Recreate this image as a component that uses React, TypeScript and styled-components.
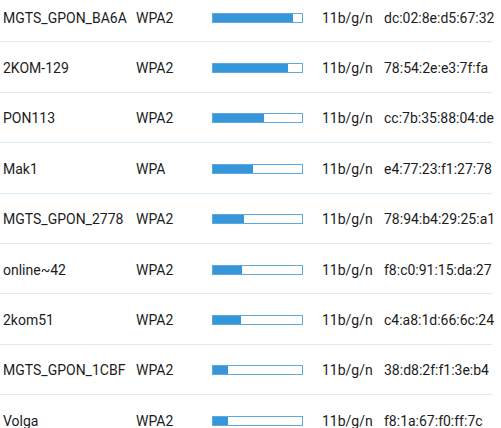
import React from "react";
import styled, { createGlobalStyle } from "styled-components";

const Global = createGlobalStyle`
  html, body { margin: 0; padding: 0; background: #fff; overflow: hidden; }
  body { font-family: Roboto, "Liberation Sans", Arial, sans-serif; }
`;

const Table = styled.div`
  width: 492px;
  margin-top: -8px;
  display: flex;
  flex-direction: column;
`;

const Row = styled.div`
  box-sizing: border-box;
  height: 50.4px;
  padding: 2px 0 0 3px;
  border-bottom: 1px solid #dcebf8;
  display: grid;
  grid-template-columns: 133px 76px 110px 62px 1fr;
  align-items: center;
  font-size: 14px;
  color: #1c1c1c;
  white-space: nowrap;
`;

const Cell = styled.div`
  overflow: visible;
`;

const Bar = styled.div`
  box-sizing: border-box;
  width: 91px;
  height: 10px;
  border: 1px solid #5fa9df;
  background: #fff;
  display: flex;
`;

const Fill = styled.div`
  height: 100%;
  background: #3597d9;
`;

const rows = [
  { ssid: "MGTS_GPON_BA6A", sec: "WPA2", sig: 80, mode: "11b/g/n", mac: "dc:02:8e:d5:67:32" },
  { ssid: "2KOM-129", sec: "WPA2", sig: 75, mode: "11b/g/n", mac: "78:54:2e:e3:7f:fa" },
  { ssid: "PON113", sec: "WPA2", sig: 51, mode: "11b/g/n", mac: "cc:7b:35:88:04:de" },
  { ssid: "Mak1", sec: "WPA", sig: 40, mode: "11b/g/n", mac: "e4:77:23:f1:27:78" },
  { ssid: "MGTS_GPON_2778", sec: "WPA2", sig: 31, mode: "11b/g/n", mac: "78:94:b4:29:25:a1" },
  { ssid: "online~42", sec: "WPA2", sig: 29, mode: "11b/g/n", mac: "f8:c0:91:15:da:27" },
  { ssid: "2kom51", sec: "WPA2", sig: 28, mode: "11b/g/n", mac: "c4:a8:1d:66:6c:24" },
  { ssid: "MGTS_GPON_1CBF", sec: "WPA2", sig: 15, mode: "11b/g/n", mac: "38:d8:2f:f1:3e:b4" },
  { ssid: "Volga", sec: "WPA2", sig: 15, mode: "11b/g/n", mac: "f8:1a:67:f0:ff:7c" },
];

export default function App() {
  return (
    <>
      <Global />
      <Table>
        {rows.map((r) => (
          <Row key={r.mac}>
            <Cell>{r.ssid}</Cell>
            <Cell>{r.sec}</Cell>
            <Cell>
              <Bar>
                <Fill style={{ width: `${r.sig}px` }} />
              </Bar>
            </Cell>
            <Cell>{r.mode}</Cell>
            <Cell>{r.mac}</Cell>
          </Row>
        ))}
      </Table>
    </>
  );
}
